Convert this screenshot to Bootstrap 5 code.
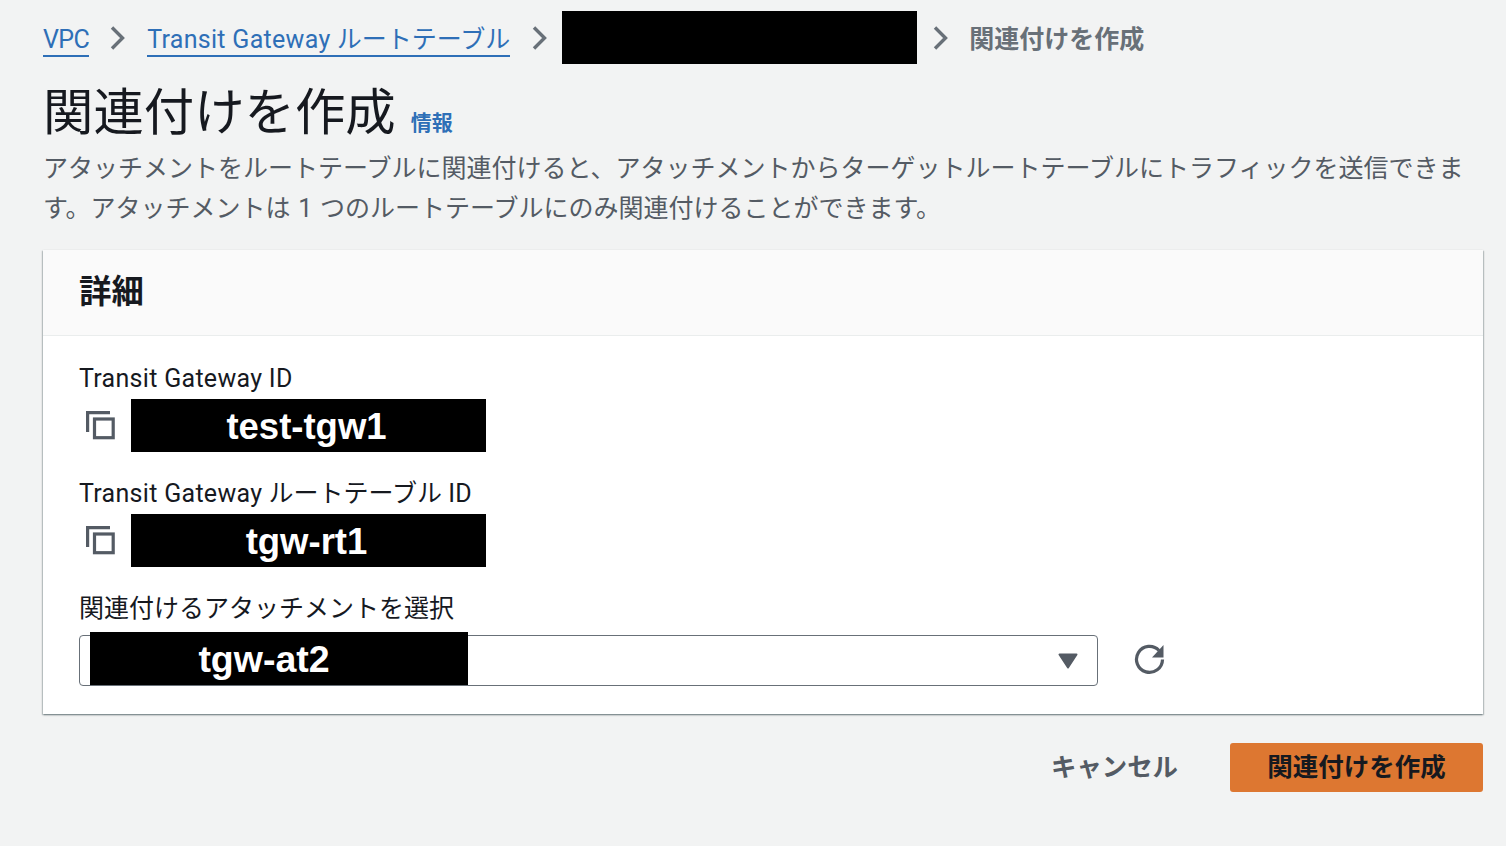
<!DOCTYPE html>
<html lang="ja">
<head>
<meta charset="utf-8">
<title>関連付けを作成</title>
<link href="https://cdn.jsdelivr.net/npm/bootstrap@5.3.0/dist/css/bootstrap.min.css" rel="stylesheet">
<style>
html,body{height:100%}
body{background:#f2f3f3;color:#16191f;font-family:Roboto,"Noto Sans CJK JP",sans-serif;font-size:25px;overflow:hidden}
.page-wrap{padding:11px 23px 0 43px}
.crumb-row{height:53px}
.crumb-link{display:inline-block;line-height:31px;margin-top:5px;color:#2e6fb7;border-bottom:2px solid #2e6fb7;text-decoration:none}
.latin{letter-spacing:.3px}
.tight{letter-spacing:-.6px}
.crumb-sep{color:#687078;flex:none}
.sep-one{margin:0 22px 0 21px}
.sep-two{margin:0 15px 0 22px}
.sep-three{margin:0 21px 0 16px}
.crumb-now{color:#687078;font-weight:700;margin-top:4px}
.redact{background:#000;color:#fff;font-family:"Liberation Sans",sans-serif;font-weight:700;font-size:36.5px;height:53px;width:355px;flex:none}
.redact-text{padding:3px 4px 0 0}
.page-title{font-size:50.4px;font-weight:400;line-height:60px;height:60px;margin:19px 0 6px;color:#16191f;white-space:nowrap}
.info-link{font-size:21px;line-height:1;font-weight:700;color:#2e6fb7;text-decoration:none;margin-left:15px}
.page-desc{color:#545b64;line-height:40px;margin:0 0 21px;word-spacing:1.5px}
.panel{background:#fff;border:0;border-radius:0;box-shadow:0 1px 2px 0 rgba(0,28,36,.35),1px 1px 1px 0 rgba(0,28,36,.15),-1px 1px 1px 0 rgba(0,28,36,.15)}
.panel-head{background:#fafafa;border-bottom:1px solid #eaeded;height:86px;padding:0 36px;font-size:32.4px;font-weight:700;line-height:84px}
.panel-body{padding:24px 36px 28px 36px;height:378px}
.field-label{line-height:34px;padding-top:2px;color:#16191f}
.field-value{margin-top:3px;margin-bottom:23px}
.copy-icon{width:30px;height:30px;margin:0 15px 0 7px;flex:none;color:#545b64;align-self:center}
.pick-row{margin-top:9px}
.pick-box{width:1019px;height:51px;border:1px solid #687078;border-radius:4px;background:#fff;position:relative}
.pick-value{position:absolute;left:10px;top:-4px;width:378px;font-size:37.5px;padding:2px 30px 0 0}
.pick-caret{position:absolute;right:19px;top:17px}
.reload-icon{margin:0 0 3px 35px;color:#545b64;flex:none}
.foot-row{margin-top:29px}
.cancel-link{color:#545b64;font-weight:700;font-size:25.4px;text-decoration:none;margin-right:52px;padding:0}
.go-btn{background:#dd7731;border:0;border-radius:3px;color:#16191f;font-weight:700;font-size:25.5px;width:253px;height:49px;padding:0;line-height:49px}
.go-btn:hover{background:#dd7731;color:#16191f}
</style>
</head>
<body>
<div class="page-wrap">
  <nav class="crumb-row d-flex align-items-center">
    <a class="crumb-link tight" href="#">VPC</a>
    <svg class="crumb-sep sep-one" width="15" height="26" viewBox="0 0 15 26" fill="none" stroke="currentColor" stroke-width="3.4"><path d="M2 2.5 12.5 13 2 23.5"/></svg>
    <a class="crumb-link" href="#"><span class="latin">Transit Gateway</span> ルートテーブル</a>
    <svg class="crumb-sep sep-two" width="15" height="26" viewBox="0 0 15 26" fill="none" stroke="currentColor" stroke-width="3.4"><path d="M2 2.5 12.5 13 2 23.5"/></svg>
    <span class="redact"></span>
    <svg class="crumb-sep sep-three" width="15" height="26" viewBox="0 0 15 26" fill="none" stroke="currentColor" stroke-width="3.4"><path d="M2 2.5 12.5 13 2 23.5"/></svg>
    <span class="crumb-now">関連付けを作成</span>
  </nav>
  <h1 class="page-title">関連付けを作成<a class="info-link" href="#">情報</a></h1>
  <p class="page-desc">アタッチメントをルートテーブルに関連付けると、アタッチメントからターゲットルートテーブルにトラフィックを送信できます。アタッチメントは 1 つのルートテーブルにのみ関連付けることができます。</p>
  <section class="card panel">
    <div class="panel-head">詳細</div>
    <div class="panel-body">
      <div class="field-label latin">Transit Gateway ID</div>
      <div class="field-value d-flex align-items-center">
        <svg class="copy-icon" viewBox="0 0 30 30" fill="none" stroke="currentColor" stroke-width="3.2"><path d="M1.6 21V1.6H24"/><rect x="8.5" y="8" width="18.7" height="18.7"/></svg>
        <div class="redact redact-text d-flex align-items-center justify-content-center">test-tgw1</div>
      </div>
      <div class="field-label"><span class="latin">Transit Gateway</span> ルートテーブル <span class="latin">ID</span></div>
      <div class="field-value d-flex align-items-center">
        <svg class="copy-icon" viewBox="0 0 30 30" fill="none" stroke="currentColor" stroke-width="3.2"><path d="M1.6 21V1.6H24"/><rect x="8.5" y="8" width="18.7" height="18.7"/></svg>
        <div class="redact redact-text d-flex align-items-center justify-content-center">tgw-rt1</div>
      </div>
      <div class="field-label">関連付けるアタッチメントを選択</div>
      <div class="pick-row d-flex align-items-center">
        <div class="pick-box">
          <div class="redact pick-value d-flex align-items-center justify-content-center">tgw-at2</div>
          <svg class="pick-caret" width="20" height="16" viewBox="0 0 20 16"><path d="M1.5 1.5h17l-8.500 13z" fill="#545b64" stroke="#545b64" stroke-width="2" stroke-linejoin="round"/></svg>
        </div>
        <svg class="reload-icon" width="32" height="32" viewBox="0 0 32 32" fill="none" stroke="currentColor" stroke-width="3.2"><path d="M26 7.500A13 13 0 1 0 29.500 16.500"/><path d="M30.500 2v12.500H19z" fill="currentColor" stroke="none"/></svg>
      </div>
    </div>
  </section>
  <div class="foot-row d-flex justify-content-end align-items-center">
    <a class="cancel-link" href="#">キャンセル</a>
    <button type="button" class="btn go-btn">関連付けを作成</button>
  </div>
</div>
<script src="https://cdn.jsdelivr.net/npm/bootstrap@5.3.0/dist/js/bootstrap.bundle.min.js"></script>
</body>
</html>
